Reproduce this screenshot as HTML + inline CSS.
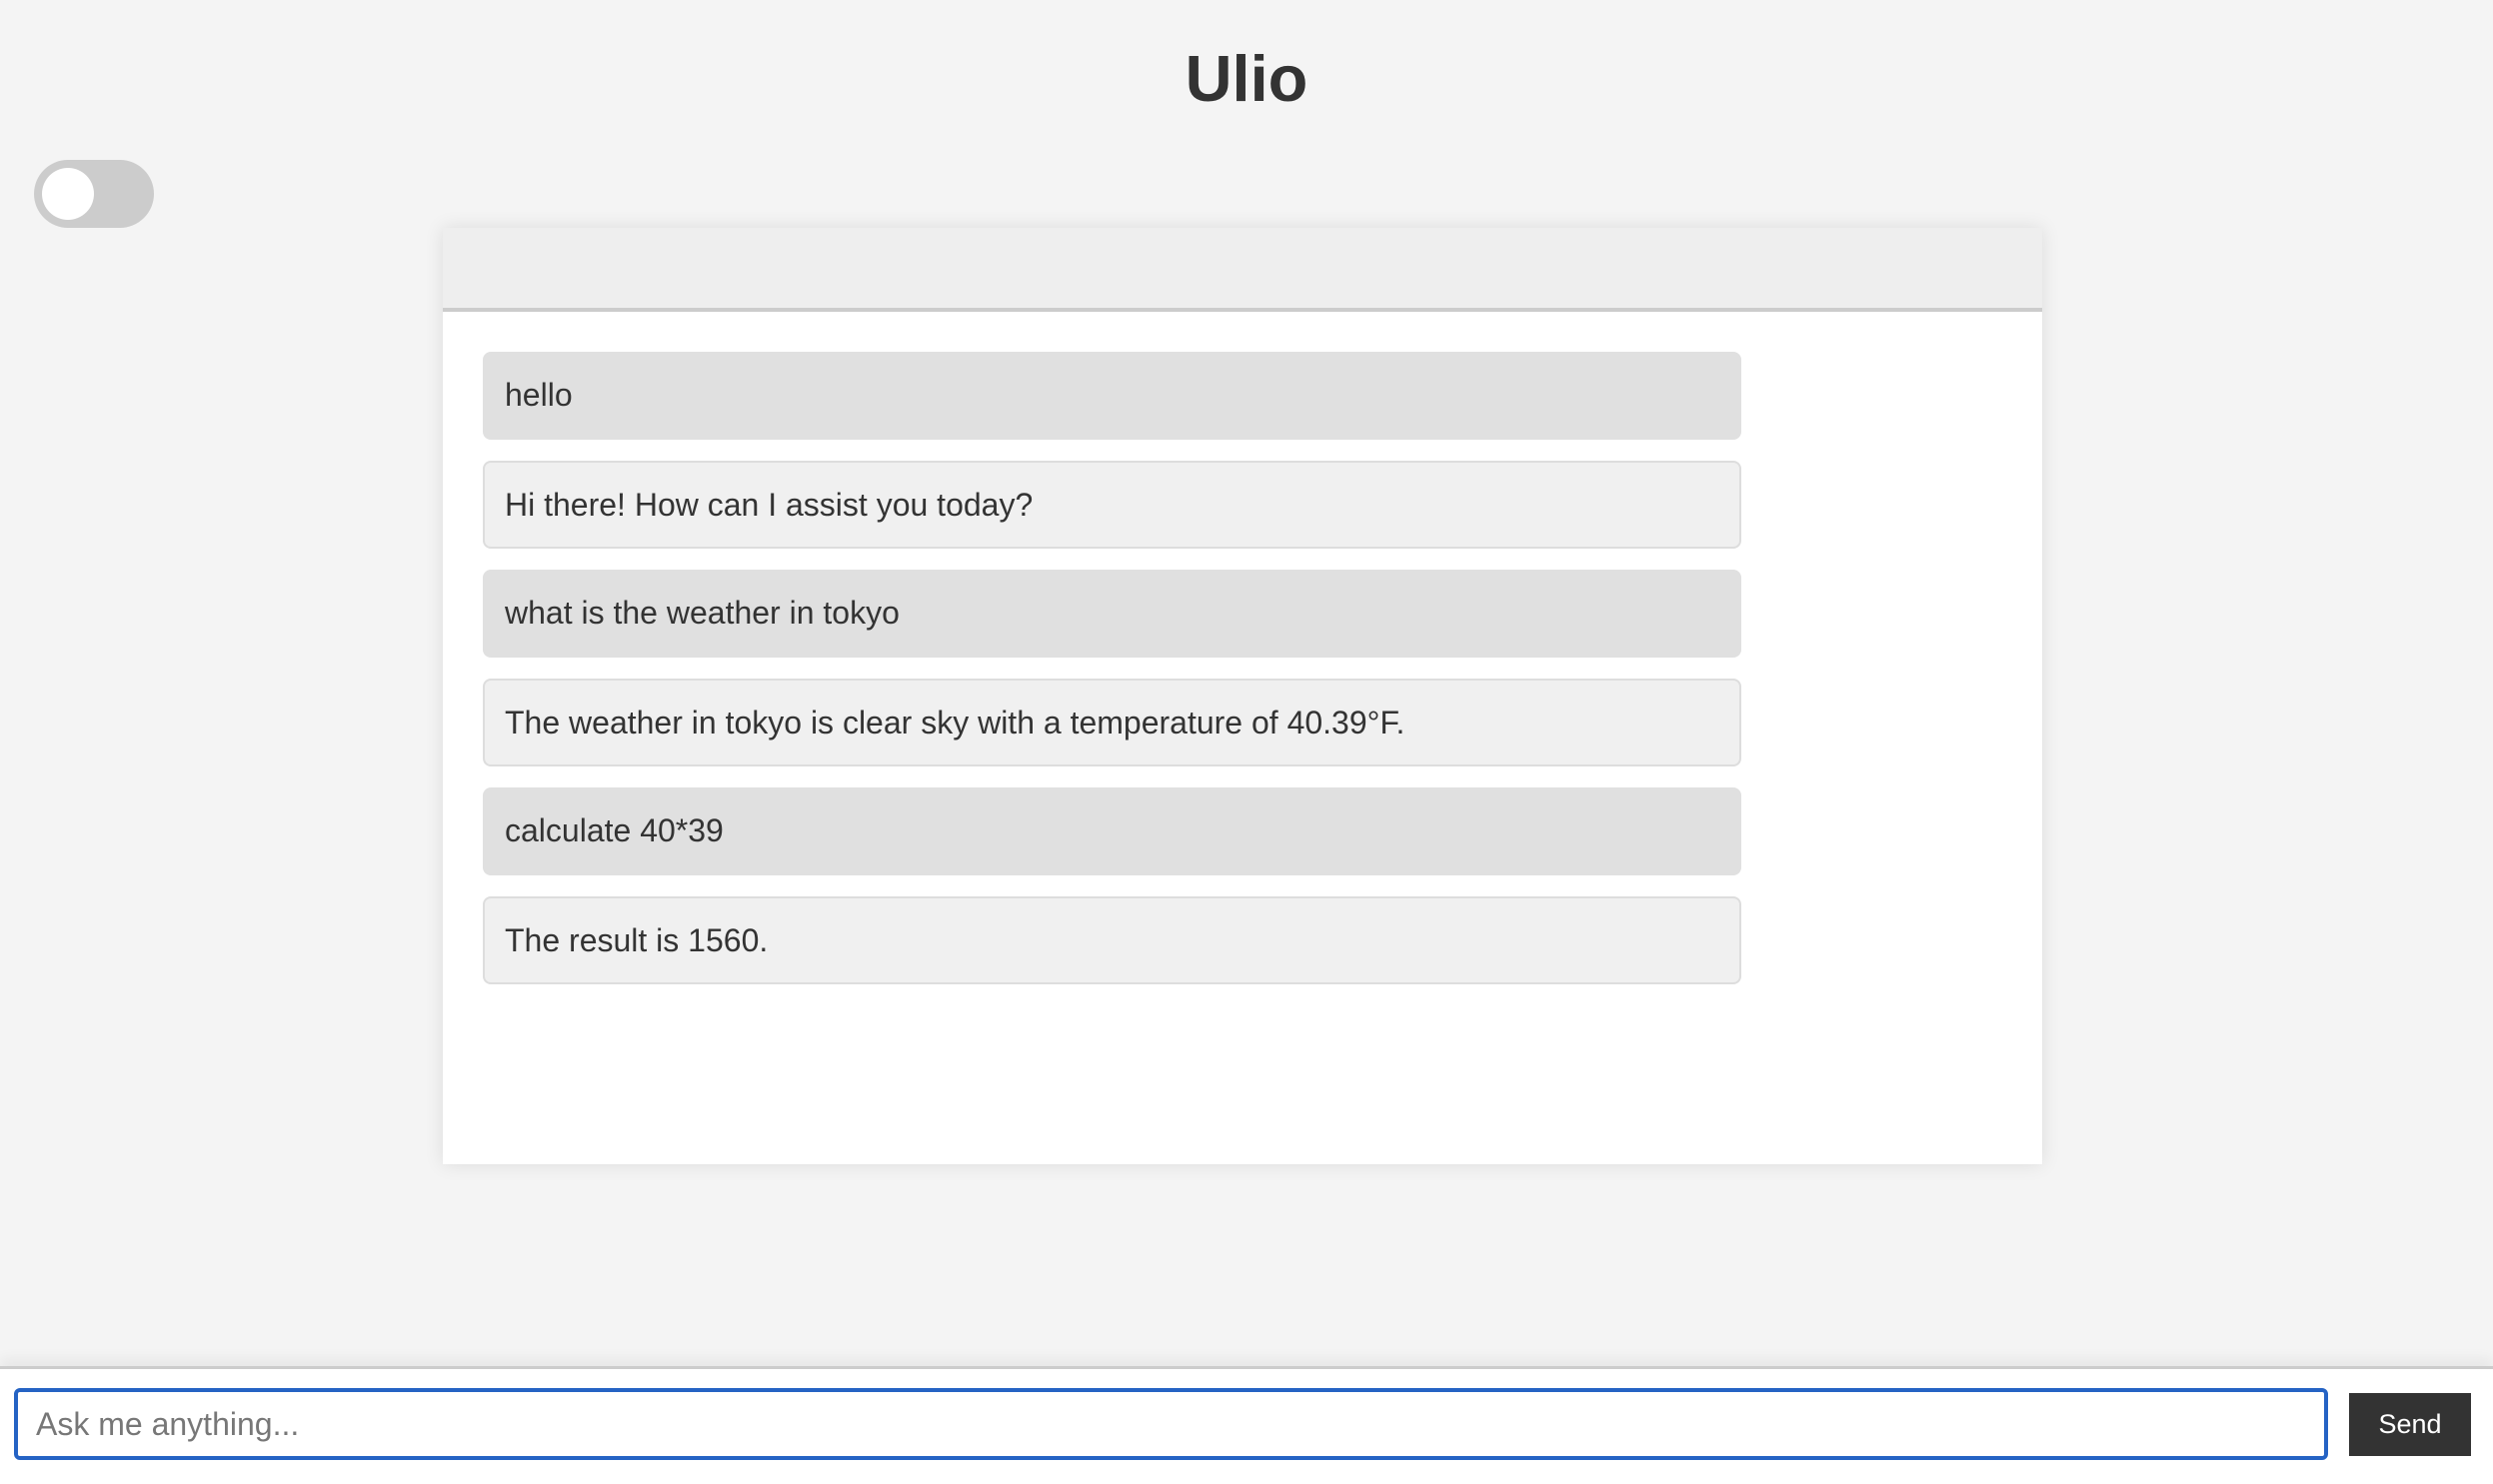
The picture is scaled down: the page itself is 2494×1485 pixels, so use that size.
<!DOCTYPE html>
<html><head><meta charset="utf-8">
<style>
html,body{margin:0;padding:0;}
body{width:2494px;height:1482px;background:#f4f4f4;position:relative;overflow:hidden;font-family:"Liberation Sans",Arial,sans-serif;color:#333;}
h1{position:absolute;left:0;width:2494px;top:39px;margin:0;text-align:center;font-size:65px;font-weight:bold;color:#333;line-height:80px;}
.tog{position:absolute;left:34px;top:160px;width:120px;height:68px;border-radius:34px;background:#ccc;}
.tog:after{content:"";position:absolute;left:8px;top:8px;width:52px;height:52px;border-radius:50%;background:#fff;}
.chat{position:absolute;left:443px;top:228px;width:1600px;height:937px;background:#fff;box-shadow:0 0 18px rgba(0,0,0,0.1);}
.hdr{height:80px;background:#eee;border-bottom:4px solid #ccc;}
.m{position:absolute;left:40px;width:1259px;height:88px;box-sizing:border-box;border-radius:8px;font-size:32px;line-height:86px;padding-left:22px;color:#333;}
.u{background:#e0e0e0;}
.b{background:#f0f0f0;border:2px solid #ddd;line-height:84px;padding-left:20px;}
.bar{position:absolute;left:0;top:1367px;width:2494px;height:115px;background:#fff;border-top:3px solid #ccc;box-shadow:0 -8px 12px rgba(0,0,0,0.05);}
.inp{position:absolute;left:14px;top:1389px;width:2315px;height:72px;box-sizing:border-box;border:4px solid #2563c4;border-radius:6px;background:#fff;font-size:32px;color:#777;line-height:64px;padding-left:18px;}
.send{position:absolute;left:2350px;top:1394px;width:122px;height:63px;background:#333;color:#fff;font-size:27px;text-align:center;line-height:63px;}
</style></head><body>
<h1>Ulio</h1>
<div class="tog"></div>
<div class="chat">
<div class="hdr"></div>
<div class="m u" style="top:124px">hello</div>
<div class="m b" style="top:233px">Hi there! How can I assist you today?</div>
<div class="m u" style="top:342px">what is the weather in tokyo</div>
<div class="m b" style="top:451px">The weather in tokyo is clear sky with a temperature of 40.39°F.</div>
<div class="m u" style="top:560px">calculate 40*39</div>
<div class="m b" style="top:669px">The result is 1560.</div>
</div>
<div class="bar"></div>
<div class="inp">Ask me anything...</div>
<div class="send">Send</div>
</body></html>
